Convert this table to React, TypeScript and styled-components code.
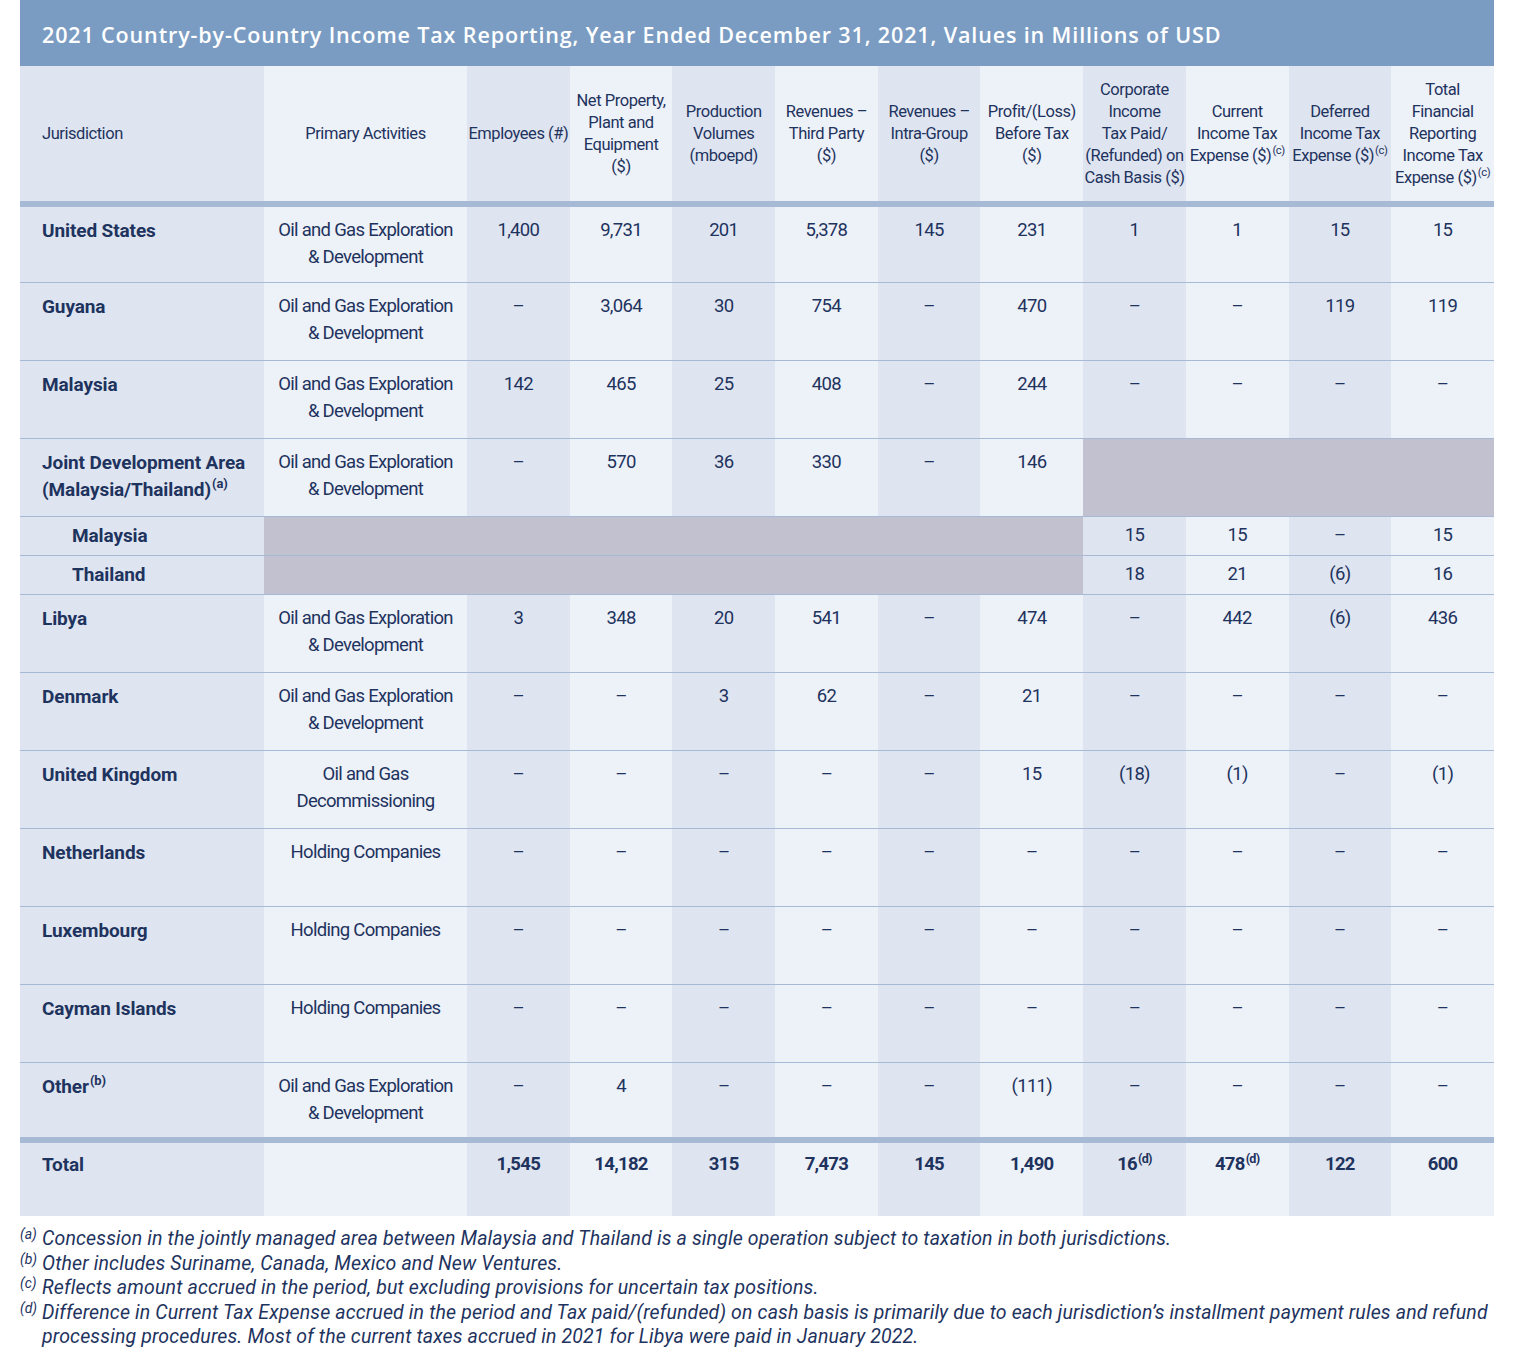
import React from "react";
import styled, { createGlobalStyle } from "styled-components";

const NAVY = "#1e335e";
const DARK = "#dfe5f0";
const LIGHT = "#edf1f8";
const GRAY = "#c2c1d0";
const RULE = "#a6b9d5";

const GlobalStyle = createGlobalStyle`
  body {
    margin: 0;
    background: #ffffff;
    font-family: Roboto, "Liberation Sans", sans-serif;
    color: ${NAVY};
  }
`;

const Page = styled.div`
  width: 1474px;
  margin: 0 0 0 20px;
`;

const TitleBar = styled.div`
  height: 66px;
  display: flex;
  align-items: center;
  padding: 2px 0 0 22px;
  box-sizing: border-box;
  background: #7b9cc2;
  color: #ffffff;
  font-family: "Open Sans", "Liberation Sans", sans-serif;
  font-weight: 600;
  font-size: 21.5px;
  letter-spacing: 0.87px;
  white-space: nowrap;
`;

const Table = styled.table`
  width: 1474px;
  table-layout: fixed;
  border-collapse: collapse;
  border-spacing: 0;
`;

const Sup = styled.sup`
  font-size: 0.68em;
  line-height: 0;
  vertical-align: 0.55em;
  margin-left: 1px;
`;

const HeadCell = styled.th<{ $bg: string; $align?: "left" | "center" }>`
  height: 135px;
  padding: 0 0 0 ${(p) => (p.$align === "left" ? "22px" : "0")};
  background: ${(p) => p.$bg};
  border-bottom: 6px solid ${RULE};
  text-align: ${(p) => p.$align || "center"};
  vertical-align: middle;
  font-weight: 400;
  font-size: 16.5px;
  line-height: 22px;
  white-space: nowrap;
  letter-spacing: -0.45px;
`;

const BodyRow = styled.tr`
  height: 78px;
  & > td {
    border-bottom: 1px solid ${RULE};
    vertical-align: top;
    padding-top: 10px;
  }
`;

const SubRow = styled.tr`
  height: 39px;
  & > td {
    border-bottom: 1px solid ${RULE};
    vertical-align: middle;
  }
`;

const TotalRow = styled.tr`
  height: 76px;
  & > td {
    border-top: 6px solid ${RULE};
    vertical-align: top;
    padding-top: 8px;
    font-weight: 700;
  }
`;

const NameCell = styled.td<{ $bg: string; $indent?: boolean }>`
  background: ${(p) => p.$bg};
  padding-left: ${(p) => (p.$indent ? "52px" : "22px")};
  text-align: left;
  font-weight: 700;
  font-size: 19px;
  line-height: 27px;
  letter-spacing: -0.1px;
  white-space: nowrap;
`;

const ValueCell = styled.td<{ $bg: string; $bold?: boolean }>`
  background: ${(p) => p.$bg};
  text-align: center;
  font-weight: ${(p) => (p.$bold ? 700 : 400)};
  font-size: 18.5px;
  line-height: 27px;
  letter-spacing: -0.7px;
  white-space: nowrap;
`;

const GrayCell = styled.td`
  background: ${GRAY};
`;

const Notes = styled.div`
  padding: 11px 0 0 22px;
  font-style: italic;
  font-size: 19.5px;
  line-height: 24.5px;
  letter-spacing: 0.15px;
`;

const Note = styled.div`
  position: relative;
  white-space: nowrap;
`;

const NoteMark = styled.span`
  position: absolute;
  left: -22px;
  top: -5px;
  font-size: 14px;
  letter-spacing: 0;
`;

type Row = {
  name: React.ReactNode;
  activity?: React.ReactNode;
  values?: React.ReactNode[];
  kind?: "full" | "jda" | "sub";
};

const OGED = (
  <>
    Oil and Gas Exploration
    <br />& Development
  </>
);
const HOLD = "Holding Companies";
const D = "–";

const rows: Row[] = [
  { name: "United States", activity: OGED, values: ["1,400", "9,731", "201", "5,378", "145", "231", "1", "1", "15", "15"] },
  { name: "Guyana", activity: OGED, values: [D, "3,064", "30", "754", D, "470", D, D, "119", "119"] },
  { name: "Malaysia", activity: OGED, values: ["142", "465", "25", "408", D, "244", D, D, D, D] },
  {
    name: (
      <>
        Joint Development Area
        <br />
        (Malaysia/Thailand)<Sup>(a)</Sup>
      </>
    ),
    activity: OGED,
    values: [D, "570", "36", "330", D, "146"],
    kind: "jda",
  },
  { name: "Malaysia", values: ["15", "15", D, "15"], kind: "sub" },
  { name: "Thailand", values: ["18", "21", "(6)", "16"], kind: "sub" },
  { name: "Libya", activity: OGED, values: ["3", "348", "20", "541", D, "474", D, "442", "(6)", "436"] },
  { name: "Denmark", activity: OGED, values: [D, D, "3", "62", D, "21", D, D, D, D] },
  {
    name: "United Kingdom",
    activity: (
      <>
        Oil and Gas
        <br />
        Decommissioning
      </>
    ),
    values: [D, D, D, D, D, "15", "(18)", "(1)", D, "(1)"],
  },
  { name: "Netherlands", activity: HOLD, values: [D, D, D, D, D, D, D, D, D, D] },
  { name: "Luxembourg", activity: HOLD, values: [D, D, D, D, D, D, D, D, D, D] },
  { name: "Cayman Islands", activity: HOLD, values: [D, D, D, D, D, D, D, D, D, D] },
  {
    name: (
      <>
        Other<Sup>(b)</Sup>
      </>
    ),
    activity: OGED,
    values: [D, "4", D, D, D, "(111)", D, D, D, D],
  },
];

const totals: React.ReactNode[] = [
  "1,545",
  "14,182",
  "315",
  "7,473",
  "145",
  "1,490",
  <>
    16<Sup>(d)</Sup>
  </>,
  <>
    478<Sup>(d)</Sup>
  </>,
  "122",
  "600",
];

const headers: React.ReactNode[] = [
  "Employees (#)",
  <>
    Net Property,
    <br />
    Plant and
    <br />
    Equipment
    <br />
    ($)
  </>,
  <>
    Production
    <br />
    Volumes
    <br />
    (mboepd)
  </>,
  <>
    Revenues –
    <br />
    Third Party
    <br />
    ($)
  </>,
  <>
    Revenues –
    <br />
    Intra-Group
    <br />
    ($)
  </>,
  <>
    Profit/(Loss)
    <br />
    Before Tax
    <br />
    ($)
  </>,
  <>
    Corporate
    <br />
    Income
    <br />
    Tax Paid/
    <br />
    (Refunded) on
    <br />
    Cash Basis ($)
  </>,
  <>
    Current
    <br />
    Income Tax
    <br />
    Expense ($)<Sup>(c)</Sup>
  </>,
  <>
    Deferred
    <br />
    Income Tax
    <br />
    Expense ($)<Sup>(c)</Sup>
  </>,
  <>
    Total
    <br />
    Financial
    <br />
    Reporting
    <br />
    Income Tax
    <br />
    Expense ($)<Sup>(c)</Sup>
  </>,
];

// column index 0 = jurisdiction; even index -> darker stripe
const shade = (i: number) => (i % 2 === 0 ? DARK : LIGHT);

const App = () => {
  return (
    <>
      <GlobalStyle />
      <Page>
        <TitleBar>
          2021 Country-by-Country Income Tax Reporting, Year Ended December 31, 2021, Values in Millions of USD
        </TitleBar>
        <Table>
          <colgroup>
            <col style={{ width: 244 }} />
            <col style={{ width: 203 }} />
            {headers.map((_, i) => (
              <col key={i} />
            ))}
          </colgroup>
          <thead>
            <tr>
              <HeadCell $bg={shade(0)} $align="left">
                Jurisdiction
              </HeadCell>
              <HeadCell $bg={shade(1)}>Primary Activities</HeadCell>
              {headers.map((h, i) => (
                <HeadCell key={i} $bg={shade(i + 2)}>
                  {h}
                </HeadCell>
              ))}
            </tr>
          </thead>
          <tbody>
            {rows.map((r, ri) => {
              if (r.kind === "sub") {
                return (
                  <SubRow key={ri}>
                    <NameCell $bg={shade(0)} $indent>
                      {r.name}
                    </NameCell>
                    <GrayCell colSpan={7} />
                    {r.values!.map((v, i) => (
                      <ValueCell key={i} $bg={shade(i + 8)}>
                        {v}
                      </ValueCell>
                    ))}
                  </SubRow>
                );
              }
              return (
                <BodyRow key={ri}>
                  <NameCell $bg={shade(0)}>{r.name}</NameCell>
                  <ValueCell $bg={shade(1)}>{r.activity}</ValueCell>
                  {r.values!.map((v, i) => (
                    <ValueCell key={i} $bg={shade(i + 2)}>
                      {v}
                    </ValueCell>
                  ))}
                  {r.kind === "jda" && <GrayCell colSpan={4} />}
                </BodyRow>
              );
            })}
          </tbody>
          <tfoot>
            <TotalRow>
              <NameCell $bg={shade(0)}>Total</NameCell>
              <ValueCell $bg={shade(1)} />
              {totals.map((v, i) => (
                <ValueCell key={i} $bg={shade(i + 2)} $bold>
                  {v}
                </ValueCell>
              ))}
            </TotalRow>
          </tfoot>
        </Table>
        <Notes>
          <Note>
            <NoteMark>(a)</NoteMark>
            Concession in the jointly managed area between Malaysia and Thailand is a single operation subject to
            taxation in both jurisdictions.
          </Note>
          <Note>
            <NoteMark>(b)</NoteMark>
            Other includes Suriname, Canada, Mexico and New Ventures.
          </Note>
          <Note>
            <NoteMark>(c)</NoteMark>
            Reflects amount accrued in the period, but excluding provisions for uncertain tax positions.
          </Note>
          <Note>
            <NoteMark>(d)</NoteMark>
            Difference in Current Tax Expense accrued in the period and Tax paid/(refunded) on cash basis is primarily
            due to each jurisdiction’s installment payment rules and refund
            <br />
            processing procedures. Most of the current taxes accrued in 2021 for Libya were paid in January 2022.
          </Note>
        </Notes>
      </Page>
    </>
  );
};

export default App;
